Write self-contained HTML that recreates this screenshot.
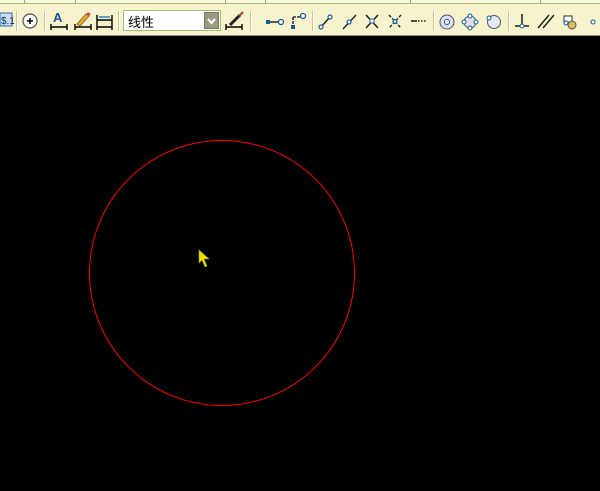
<!DOCTYPE html>
<html><head><meta charset="utf-8"><style>
html,body{margin:0;padding:0;width:600px;height:491px;background:#000;overflow:hidden;font-family:"Liberation Sans","Noto Sans CJK SC",sans-serif}
#tb{position:absolute;left:0;top:0;width:600px;height:35px;background:#f7f3cf;border-bottom:1px solid #8a8a80}
#strip{position:absolute;left:0;top:0;width:600px;height:3px;background:#fbf9e6;border-bottom:1px solid #a8c070}
.sep{position:absolute;top:11px;width:1px;height:20px;background:#c9c4a0;border-right:1px solid #fff}
.tsep{position:absolute;top:0;width:1px;height:4px;background:#a0a080}
#combo{position:absolute;left:123px;top:10px;width:98px;height:21px;background:#fff;border:1px solid #9ec070;box-sizing:border-box}
#combo span{position:absolute;left:4px;top:1px;font-size:13px;color:#000;font-family:"Noto Sans CJK SC",sans-serif}
#dd{position:absolute;right:1px;top:1px;width:15px;height:17px;background:#9a9a82;border:1px solid #7a7a60;box-sizing:border-box}
svg{position:absolute;left:0;top:0}
</style></head><body>
<div id="tb"></div><div id="strip"></div>
<div class="tsep" style="left:24px"></div><div class="tsep" style="left:75px"></div><div class="tsep" style="left:225px"></div>
<div class="tsep" style="left:265px"></div><div class="tsep" style="left:410px"></div><div class="tsep" style="left:540px"></div>
<div class="sep" style="left:16px"></div><div class="sep" style="left:44px"></div><div class="sep" style="left:118px"></div>
<div class="sep" style="left:250px"></div><div class="sep" style="left:312px"></div><div class="sep" style="left:433px"></div><div class="sep" style="left:508px"></div>
<div id="combo"><span>线性</span><div id="dd"><svg width="13" height="15" style="left:0;top:0"><path d="M3 6 L6.5 10 L10 6" stroke="#fff" stroke-width="2.2" fill="none"/></svg></div></div>
<svg width="600" height="491">
<!-- left partial icon -->
<rect x="0" y="13" width="12" height="13" fill="#cde" stroke="#369" stroke-width="1"/>
<text x="1" y="24" font-size="10" fill="#036" font-family="Liberation Sans">$.1</text>
<!-- circle plus -->
<circle cx="30" cy="21" r="7" fill="#fff" stroke="#555" stroke-width="1.2"/>
<path d="M27 21h6M30 18v6" stroke="#000" stroke-width="1.5"/>
<!-- A dim -->
<text x="53" y="22" font-size="13" font-weight="bold" fill="#1a4f9c" font-family="Liberation Sans">A</text>
<path d="M51 27h16M51 24v6M67 24v6" stroke="#000" stroke-width="1.4"/>
<!-- pencil -->
<path d="M75 27h16M75 24v6M91 24v6" stroke="#000" stroke-width="1.4"/>
<path d="M77 24 L86 14 L89 16 L80 26 Z" fill="#e8b030" stroke="#805010" stroke-width="0.8"/>
<path d="M86 14 L88 12 L91 14 L89 16Z" fill="#d05050"/>
<!-- HH -->
<path d="M97 15v15M112 15v15M97 27h15M97 20h15" stroke="#000" stroke-width="1.4"/>
<path d="M99 17h11" stroke="#3a80c0" stroke-width="1.5"/>
<!-- brush dim -->
<path d="M226 27h16M226 24v6M242 24v6" stroke="#000" stroke-width="1.4"/>
<path d="M230 25 L240 15" stroke="#222" stroke-width="3"/><path d="M239 16 L243 12" stroke="#b04040" stroke-width="2"/>
<!-- point to point -->
<path d="M268 22h11" stroke="#333" stroke-width="1.6"/><rect x="266" y="20" width="4" height="4" fill="#1060a0"/><circle cx="281" cy="22" r="2.5" fill="#fff" stroke="#1060a0" stroke-width="1.3"/>
<path d="M293 17h9M293 17v8" stroke="#333" stroke-width="1.6" stroke-dasharray="3,1"/><rect x="291" y="25" width="4" height="4" fill="#1060a0"/><circle cx="303" cy="16" r="2.5" fill="#fff" stroke="#1060a0" stroke-width="1.3"/>
<!-- lines -->
<path d="M320 28 L331 16" stroke="#222" stroke-width="1.4"/><circle cx="321" cy="27" r="2" fill="#fff" stroke="#1060a0" stroke-width="1.2"/><circle cx="330" cy="17" r="2" fill="#fff" stroke="#1060a0" stroke-width="1.2"/>
<path d="M343 29 L356 15" stroke="#222" stroke-width="1.4"/><circle cx="349" cy="22" r="2" fill="#fff" stroke="#1060a0" stroke-width="1.2"/>
<path d="M366 15 L378 28 M378 15 L366 28" stroke="#222" stroke-width="1.6"/><rect x="370" y="19" width="4" height="4" fill="#fff" stroke="#1060a0"/>
<path d="M389 15 L401 28 M401 15 L389 28" stroke="#222" stroke-width="1.4" stroke-dasharray="3,1.5"/><circle cx="395" cy="21.5" r="2" fill="#fff" stroke="#1060a0" stroke-width="1.2"/>
<path d="M411 21h6" stroke="#222" stroke-width="1.6"/><path d="M418 21h9" stroke="#222" stroke-width="1.6" stroke-dasharray="1.5,1.5"/>
<!-- circles -->
<circle cx="447" cy="22" r="7" fill="#dde" stroke="#556" stroke-width="1"/><circle cx="447" cy="22" r="2.5" fill="#fff" stroke="#1060a0"/>
<circle cx="470" cy="22" r="6" fill="#dde" stroke="#556" stroke-width="1"/>
<circle cx="470" cy="16" r="2" fill="#fff" stroke="#1060a0"/><circle cx="470" cy="28" r="2" fill="#fff" stroke="#1060a0"/><circle cx="464" cy="22" r="2" fill="#fff" stroke="#1060a0"/><circle cx="476" cy="22" r="2" fill="#fff" stroke="#1060a0"/>
<circle cx="494" cy="22" r="6.5" fill="#e4e8f0" stroke="#556" stroke-width="1"/><circle cx="489" cy="18" r="2" fill="#fff" stroke="#1060a0"/>
<!-- perpendicular etc -->
<path d="M515 26h14M522 14v12" stroke="#222" stroke-width="1.5"/><circle cx="522" cy="26" r="2" fill="#fff" stroke="#1060a0"/>
<path d="M538 28 L549 15 M543 28 L554 15" stroke="#222" stroke-width="1.5"/>
<rect x="564" y="16" width="8" height="6" fill="#fff" stroke="#333"/><circle cx="572" cy="25" r="4" fill="#d8c060" stroke="#555"/><circle cx="566" cy="23" r="2" fill="#fff" stroke="#1060a0"/>
<circle cx="593" cy="22" r="2" fill="#fff" stroke="#1060a0"/>
<!-- drawing -->
<circle cx="222" cy="273" r="132.5" fill="none" stroke="#ff0000" stroke-width="1"/>
<path d="M199 250 L199 263 L202 260 L205 267 L207 266 L204 259 L209 259 Z" fill="#e8e000" stroke="#a8a000" stroke-width="0.6"/>
</svg>
</body></html>
